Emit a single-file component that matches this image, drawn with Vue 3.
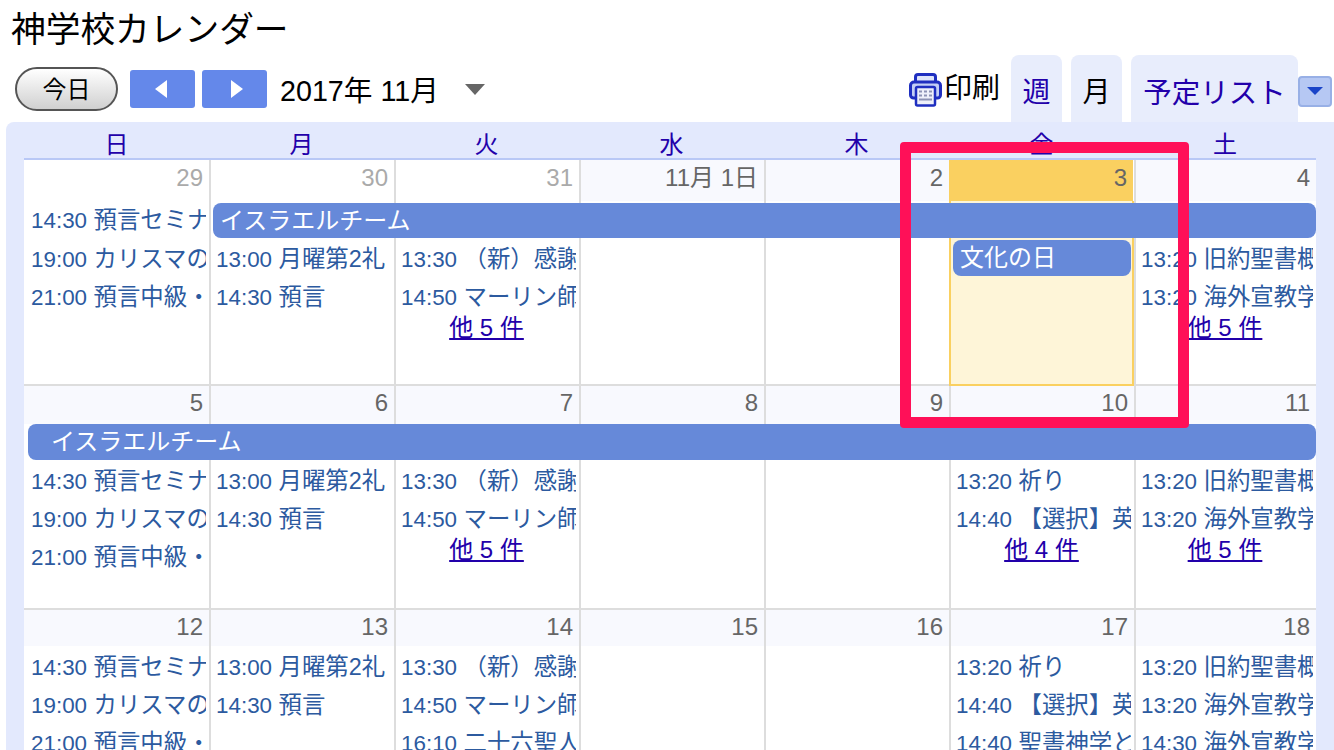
<template>
  <div class="page">
    <h1 class="title">神学校カレンダー</h1>

    <div class="toolbar">
      <button class="today-btn">今日</button>
      <button class="nav"><span class="tri-left"></span></button>
      <button class="nav"><span class="tri-right"></span></button>
      <span class="month">2017年 11月</span>
      <span class="month-arrow"></span>

      <div class="views">
        <svg class="printer" viewBox="0 0 33 34" width="33" height="34">
          <path d="M6.500 9V4a2.500 2.500 0 0 1 2.500-2.500h15A2.500 2.500 0 0 1 26.500 4v5" fill="#dfe5fa" stroke="#1f2fc0" stroke-width="3" />
          <path d="M7 25H4.500A3 3 0 0 1 1.500 22V12.500a3.500 3.500 0 0 1 3.500-3.500h23a3.500 3.500 0 0 1 3.500 3.500V22a3 3 0 0 1-3 3H26" fill="#c3cff5" stroke="#1f2fc0" stroke-width="3" />
          <rect x="7" y="14" width="19" height="18.500" rx="1.500" fill="#eef0fa" stroke="#1f2fc0" stroke-width="2.500" />
          <path d="M10 18.500h3M15 18.500h3M20 18.500h3M10 22.500h3M15 22.500h3M20 22.500h3M10 26.500h13" stroke="#8d93b5" stroke-width="2" />
        </svg>
        <span class="print-label">印刷</span>
        <a class="tab">週</a>
        <a class="tab active">月</a>
        <a class="tab wide">予定リスト</a>
        <span class="drop"><span class="drop-arrow"></span></span>
      </div>
    </div>

    <div class="calendar">
      <div class="days">
        <div v-for="d in dayNames" :key="d" class="day">{{ d }}</div>
      </div>

      <div v-for="(week, w) in weeks" :key="w" class="week" :class="week.cls">
        <template v-for="(c, i) in week.cells" :key="'c' + i">
          <div class="cell" :class="{ first: i === 0, now: c.today }" :style="{ gridColumn: i + 1 }"></div>
          <div class="date" :class="{ out: c.out, now: c.today, first: i === 0 }" :style="{ gridColumn: i + 1 }">{{ c.date }}</div>
          <div
            v-for="(e, n) in c.events"
            :key="n"
            class="event"
            :style="{ gridColumn: i + 1, gridRow: c.start + n }"
          ><span class="time">{{ e.slice(0, 5) }}</span> {{ e.slice(6) }}</div>
          <a
            v-if="c.more"
            class="more"
            :style="{ gridColumn: i + 1, gridRow: c.start + c.events.length }"
          >他 {{ c.more }} 件</a>
          <div
            v-if="c.allday"
            class="holiday"
            :style="{ gridColumn: i + 1, gridRow: c.start }"
          >{{ c.allday }}</div>
        </template>
        <div v-if="week.bar" class="bar" :class="week.bar.cls" :style="{ gridColumn: week.bar.col }">イスラエルチーム</div>
      </div>
    </div>

    <div class="highlight"></div>
  </div>
</template>

<script setup>
const dayNames = ['日', '月', '火', '水', '木', '金', '土']

const sun = ['14:30 預言セミナ', '19:00 カリスマの', '21:00 預言中級・']
const mon = ['13:00 月曜第2礼', '14:30 預言']
const tue = ['13:30 （新）感謝', '14:50 マーリン師']
const fri = ['13:20 祈り', '14:40 【選択】英']
const sat = ['13:20 旧約聖書概', '13:20 海外宣教学']

const weeks = [
  {
    cls: 'w1',
    bar: { col: '2 / 8', cls: 'from-mon' },
    cells: [
      { date: 29, out: true, start: 2, events: sun },
      { date: 30, out: true, start: 3, events: mon },
      { date: 31, out: true, start: 3, events: tue, more: 5 },
      { date: '11月 1日', start: 3, events: [] },
      { date: 2, start: 3, events: [] },
      { date: 3, today: true, start: 3, events: [], allday: '文化の日' },
      { date: 4, start: 3, events: sat, more: 5 }
    ]
  },
  {
    cls: 'w2',
    bar: { col: '1 / 8', cls: 'cont' },
    cells: [
      { date: 5, start: 3, events: sun },
      { date: 6, start: 3, events: mon },
      { date: 7, start: 3, events: tue, more: 5 },
      { date: 8, start: 3, events: [] },
      { date: 9, start: 3, events: [] },
      { date: 10, start: 3, events: fri, more: 4 },
      { date: 11, start: 3, events: sat, more: 5 }
    ]
  },
  {
    cls: 'w3',
    cells: [
      { date: 12, start: 2, events: sun },
      { date: 13, start: 2, events: mon },
      { date: 14, start: 2, events: [...tue, '16:10 二十六聖人'] },
      { date: 15, start: 2, events: [] },
      { date: 16, start: 2, events: [] },
      { date: 17, start: 2, events: [...fri, '14:40 聖書神学と'] },
      { date: 18, start: 2, events: [...sat, '14:30 海外宣教学'] }
    ]
  }
]
</script>

<style>
html, body {
  overflow: hidden;
  background: #fff;
}
</style>

<style scoped>
.page {
  position: relative;
  width: 1334px;
  height: 750px;
  overflow: hidden;
  font-family: "Liberation Sans", "Noto Sans CJK JP", sans-serif;
  color: #000;
}
.title {
  margin: 0;
  height: 55px;
  padding-left: 11px;
  font-size: 34.700px;
  line-height: 60px;
  font-weight: normal;
  box-sizing: border-box;
}
.toolbar {
  display: flex;
  align-items: center;
  height: 67px;
  padding-left: 15px;
  padding-right: 2px;
}
.today-btn {
  width: 103px;
  height: 44px;
  border: 2px solid #555;
  border-radius: 22px;
  background: linear-gradient(#fff, #d0d0d0);
  font: inherit;
  font-size: 24px;
  padding: 0 0 3px;
  margin-right: 12px;
}
.nav {
  display: flex;
  align-items: center;
  justify-content: center;
  width: 65px;
  height: 38px;
  margin-right: 7px;
  padding: 0;
  border: none;
  border-radius: 3px;
  background: #6488ea;
}
.tri-left {
  border: 9px solid transparent;
  border-right: 12px solid #fff;
  border-left: none;
  margin-right: 4px;
}
.tri-right {
  border: 9px solid transparent;
  border-left: 12px solid #fff;
  border-right: none;
  margin-left: 4px;
}
.month {
  margin-left: 6px;
  font-size: 28.700px;
}
.month-arrow {
  margin-left: 26px;
  margin-top: 2px;
  border: 10px solid transparent;
  border-top: 11px solid #666;
  border-bottom: none;
}
.views {
  display: flex;
  align-items: center;
  align-self: stretch;
  margin-left: auto;
}
.printer {
  margin-top: 2px;
}
.print-label {
  margin-left: 2px;
  margin-right: 11px;
  font-size: 28px;
  margin-top: -5px;
}
.tab {
  display: flex;
  align-items: center;
  justify-content: center;
  align-self: stretch;
  width: 51px;
  margin-right: 9px;
  padding-top: 3px;
  box-sizing: border-box;
  background: #e8edfc;
  border-radius: 8px 8px 0 0;
  color: #2200aa;
  font-size: 28px;
}
.tab.active {
  color: #000;
}
.tab.wide {
  width: 167px;
  margin-right: 0;
  font-size: 28.500px;
}
.drop {
  display: flex;
  align-items: center;
  justify-content: center;
  width: 34px;
  height: 31px;
  margin-top: 5px;
  box-sizing: border-box;
  border: 2px solid #98b0e6;
  border-radius: 4px;
  background: #b6c8f3;
}
.drop-arrow {
  border: 8.500px solid transparent;
  border-top: 8px solid #1a44c8;
  border-bottom: none;
}
.calendar {
  margin-left: 6px;
  height: 640px;
  padding-left: 18px;
  padding-right: 18px;
  background: #e3e9fd;
  border-radius: 8px 0 0 0;
}
.days {
  display: grid;
  grid-template-columns: repeat(6, 185px) 182px;
  height: 36px;
  border-bottom: 2px solid #b9c8f6;
}
.day {
  text-align: center;
  color: #2200aa;
  font-size: 24px;
  line-height: 46px;
  overflow: hidden;
  height: 36px;
}
.week {
  display: grid;
  grid-template-columns: repeat(6, 185px) 182px;
  background: #fff;
  border-bottom: 2px solid #ddd;
}
.w1 {
  grid-template-rows: 41px 39px 38px 38px 38px 1fr;
  height: 224px;
}
.w2 {
  grid-template-rows: 38px 38px 38px 38px 38px 1fr;
  height: 222px;
}
.w3 {
  grid-template-rows: 38px 38px 38px 38px 38px;
  height: 200px;
}
.cell {
  grid-row: 1 / -1;
  border-left: 2px solid #ddd;
}
.cell.first {
  border-left: none;
}
.cell.now {
  margin-top: 41px;
  margin-bottom: -2px;
  border: 2px solid #fad060;
  border-top: none;
  background: #fef5d8;
}
.date {
  grid-row: 1;
  text-align: right;
  padding-right: 6px;
  padding-top: 2px;
  margin-left: 2px;
  background: #f8f9fe;
  color: #666;
  font-size: 24px;
  line-height: 30px;
}
.w1 .date {
  padding-top: 3px;
}
.w3 .date {
  margin-bottom: 2px;
}
.date.first {
  margin-left: 0;
}
.date.out {
  background: #fff;
  color: #aaa;
}
.date.now {
  background: #fad060;
  margin-left: 0;
  margin-right: 1px;
}
.event {
  min-width: 0;
  overflow: hidden;
  white-space: nowrap;
  margin-left: 7px;
  margin-right: 3px;
  color: #2c5a9f;
  font-size: 23.400px;
  line-height: 38px;
}
.time {
  font-size: 22.400px;
}
.more {
  align-self: start;
  justify-self: center;
  color: #2200aa;
  font-size: 24px;
  line-height: 24px;
  text-decoration: underline;
}
.holiday {
  margin: 0 3px 2px 4px;
  padding-left: 7px;
  background: #6689d9;
  border-radius: 8px;
  color: #fff;
  font-size: 24px;
  line-height: 36px;
}
.bar {
  grid-row: 2;
  height: 35px;
  align-self: start;
  background: #6689d9;
  border-radius: 8px;
  color: #fff;
  font-size: 24px;
  line-height: 35px;
  white-space: nowrap;
  padding-left: 7px;
}
.bar.from-mon {
  margin-top: 2px;
  margin-left: 4px;
}
.bar.cont {
  height: 36px;
  margin-left: 4px;
  padding-left: 23px;
}
.highlight {
  position: absolute;
  left: 900px;
  top: 142px;
  width: 289px;
  height: 286px;
  box-sizing: border-box;
  border: 11px solid #ff1058;
  border-radius: 4px;
}
</style>
